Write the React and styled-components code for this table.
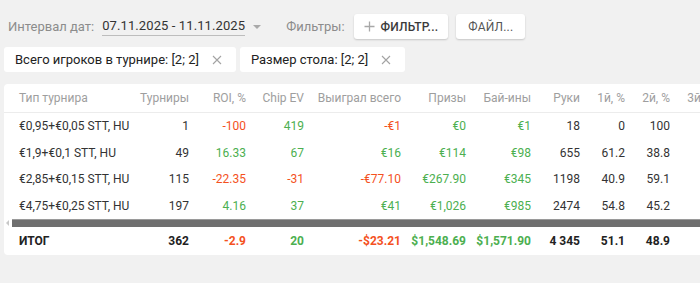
import React from "react";
import styled, { createGlobalStyle } from "styled-components";

const Global = createGlobalStyle`
  html, body { margin: 0; padding: 0; background: #f1f1f1; overflow: hidden; }
  body { font-family: Roboto, "Noto Sans", Arial, sans-serif; }
  * { box-sizing: border-box; }
`;

const Page = styled.div`
  width: 700px;
  height: 283px;
  padding-top: 14px;
  overflow: hidden;
`;

const Toolbar = styled.div`
  display: flex;
  align-items: center;
  height: 25px;
  padding-left: 8px;
  font-size: 13px;
`;

const Label = styled.span`
  color: #8c8c8c;
  margin-right: ${(p) => p.$mr || 0}px;
`;

const DateValue = styled.span`
  color: #333;
  border-bottom: 1px solid #bdbdbd;
  line-height: 16px;
  padding-bottom: 1px;
  letter-spacing: 0.1px;
`;

const Caret = styled.span`
  width: 0;
  height: 0;
  border-left: 4px solid transparent;
  border-right: 4px solid transparent;
  border-top: 4px solid #a9a9a9;
  margin: 1px 25px 0 8px;
`;

const Button = styled.button`
  display: flex;
  align-items: center;
  gap: 6px;
  height: 25px;
  padding: 0 ${(p) => p.$px || 10}px;
  margin-left: ${(p) => p.$ml || 0}px;
  background: #fff;
  border: none;
  border-radius: 3px;
  box-shadow: 0 1px 2px rgba(0, 0, 0, 0.18);
  font-family: Roboto, Arial, sans-serif;
  font-size: 12px;
  font-weight: ${(p) => (p.$bold ? 500 : 400)};
  color: ${(p) => (p.$bold ? "#3a3a3a" : "#555")};
  letter-spacing: 0.2px;
`;

const ChipRow = styled.div`
  display: flex;
  gap: 4px;
  padding-left: 4px;
  margin-top: 8px;
`;

const Chip = styled.div`
  display: flex;
  align-items: center;
  height: 25px;
  padding: 0 14px 0 11px;
  background: #fff;
  border-radius: 3px;
  font-size: 13px;
  color: #222;
`;

const ChipClose = styled.span`
  margin-left: 13px;
  display: flex;
`;

const Card = styled.div`
  margin: 12px 0 0 4px;
  width: 760px;
  background: #fff;
  border-radius: 4px;
  overflow: hidden;
`;

const COLS = "136px 49px 57px 58px 97px 65px 65px 49px 45px 45px 45px";

const Row = styled.div`
  display: grid;
  grid-template-columns: ${COLS};
  align-items: center;
  height: ${(p) => p.$h}px;
  border-bottom: ${(p) => (p.$line ? "1px solid #ececec" : "none")};
  font-size: 12px;
  font-weight: ${(p) => (p.$bold ? 700 : 400)};
  color: ${(p) => (p.$head ? "#9e9e9e" : p.$bold ? "#222" : "#333")};
`;

const Cell = styled.div`
  text-align: ${(p) => (p.$left ? "left" : "right")};
  padding-left: ${(p) => (p.$left ? 15 : 0)}px;
  white-space: nowrap;
  color: ${(p) =>
    p.$tone === "red" ? "#f4511e" : p.$tone === "green" ? "#4caf50" : "inherit"};
`;

const Scroll = styled.div`
  display: flex;
  align-items: center;
  height: 8px;
`;

const ScrollArrow = styled.span`
  width: 0;
  height: 0;
  border-top: 3px solid transparent;
  border-bottom: 3px solid transparent;
  border-right: 3px solid #c8c8c8;
  margin: 0 3px 0 2px;
`;

const ScrollThumb = styled.div`
  flex: 1;
  height: 8px;
  background: #6f6f6f;
  border-top: 1px solid #9a9a9a;
`;

const headers = ["Тип турнира", "Турниры", "ROI, %", "Chip EV", "Выиграл всего", "Призы", "Бай-ины", "Руки", "1й, %", "2й, %", "3й, %"];

const rows = [
  [["€0,95+€0,05 STT, HU"], ["1"], ["-100", "red"], ["419", "green"], ["-€1", "red"], ["€0", "green"], ["€1", "green"], ["18"], ["0"], ["100"], [""]],
  [["€1,9+€0,1 STT, HU"], ["49"], ["16.33", "green"], ["67", "green"], ["€16", "green"], ["€114", "green"], ["€98", "green"], ["655"], ["61.2"], ["38.8"], [""]],
  [["€2,85+€0,15 STT, HU"], ["115"], ["-22.35", "red"], ["-31", "red"], ["-€77.10", "red"], ["€267.90", "green"], ["€345", "green"], ["1198"], ["40.9"], ["59.1"], [""]],
  [["€4,75+€0,25 STT, HU"], ["197"], ["4.16", "green"], ["37", "green"], ["€41", "green"], ["€1,026", "green"], ["€985", "green"], ["2474"], ["54.8"], ["45.2"], [""]],
];

const total = [["ИТОГ"], ["362"], ["-2.9", "red"], ["20", "green"], ["-$23.21", "red"], ["$1,548.69", "green"], ["$1,571.90", "green"], ["4 345"], ["51.1"], ["48.9"], [""]];

const Plus = () => (
  <svg width="11" height="11" viewBox="0 0 11 11">
    <path d="M5.5 0.5v10M0.5 5.5h10" stroke="#a8a8a8" strokeWidth="1.3" />
  </svg>
);

const Cross = () => (
  <svg width="10" height="10" viewBox="0 0 10 10">
    <path d="M1 1l8 8M9 1l-8 8" stroke="#a3a3a3" strokeWidth="1.1" />
  </svg>
);

const renderCells = (cells) =>
  cells.map(([v, tone], i) => (
    <Cell key={i} $left={i === 0} $tone={tone}>
      {v}
    </Cell>
  ));

export default function App() {
  return (
    <Page>
      <Global />
      <Toolbar>
        <Label $mr={8}>Интервал дат:</Label>
        <DateValue>07.11.2025 - 11.11.2025</DateValue>
        <Caret />
        <Label $mr={9}>Фильтры:</Label>
        <Button $bold $px={10}>
          <Plus />
          ФИЛЬТР...
        </Button>
        <Button $ml={8} $px={12}>ФАЙЛ...</Button>
      </Toolbar>
      <ChipRow>
        <Chip>
          Всего игроков в турнире: [2; 2]
          <ChipClose><Cross /></ChipClose>
        </Chip>
        <Chip>
          Размер стола: [2; 2]
          <ChipClose><Cross /></ChipClose>
        </Chip>
      </ChipRow>
      <Card>
        <Row $h={29} $head $line>
          {headers.map((h, i) => (
            <Cell key={i} $left={i === 0}>{h}</Cell>
          ))}
        </Row>
        {rows.map((r, i) => (
          <Row key={i} $h={26.5}>{renderCells(r)}</Row>
        ))}
        <Scroll>
          <ScrollArrow />
          <ScrollThumb />
        </Scroll>
        <Row $h={28} $bold>{renderCells(total)}</Row>
      </Card>
    </Page>
  );
}
